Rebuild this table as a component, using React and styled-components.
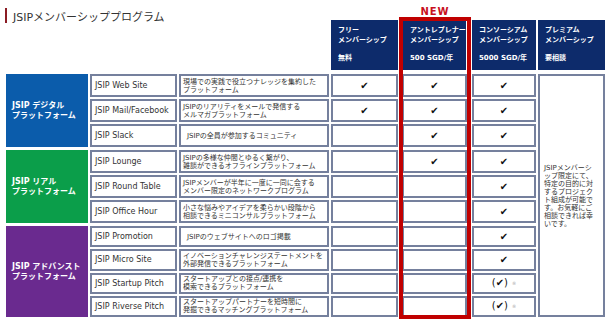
import React from "react";
import styled, { createGlobalStyle } from "styled-components";

const GlobalStyle = createGlobalStyle`
  html, body {
    margin: 0;
    padding: 0;
    background: #fff;
  }
  body {
    font-family: "DejaVu Sans", "Noto Sans CJK JP", sans-serif;
    color: #333;
  }
`;

const COLS = "82px 87px 150px 67px 70px 64px";

const Page = styled.div`
  position: relative;
  width: 610px;
  height: 324px;
  padding-left: 6px;
  box-sizing: border-box;
  overflow: hidden;
`;

const TopGrid = styled.div`
  display: grid;
  grid-template-columns: ${COLS} 67px;
  grid-template-rows: 16px 50px;
  column-gap: 2px;
  row-gap: 4px;
`;

const Title = styled.h1`
  grid-column: 1 / 4;
  grid-row: 1 / 3;
  align-self: start;
  display: flex;
  align-items: center;
  gap: 6px;
  height: 15px;
  margin: 8px 0 0 -1px;
  font-size: 11px;
  font-weight: normal;
  color: #333;

  &::before {
    content: "";
    width: 2px;
    height: 15px;
    background: #8b1c24;
  }
`;

const NewLabel = styled.div`
  grid-column: 5;
  grid-row: 1;
  align-self: end;
  text-align: center;
  font-size: 10px;
  line-height: 10px;
  font-weight: bold;
  letter-spacing: 1px;
  color: #c8101e;
  margin-bottom: -1px;
`;

const HeadCell = styled.div`
  grid-row: 2;
  grid-column: ${(p) => p.col};
  margin: ${(p) => (p.inset ? "0 4px 0 3px" : "0")};
  padding: 5px 4px 0 7px;
  background: #0d2b6b;
  color: #fff;
  font-size: 7px;
  line-height: 10px;
  font-weight: bold;
  white-space: nowrap;
`;

const Price = styled.div`
  margin-top: 8px;
`;

const Body = styled.div`
  display: flex;
  gap: 2px;
  margin-top: 4px;
`;

const Groups = styled.div`
  display: flex;
  flex-direction: column;
  gap: 3px;
`;

const Group = styled.div`
  display: grid;
  grid-template-columns: ${COLS};
  grid-template-rows: repeat(${(p) => p.rows}, 1fr);
  column-gap: 2px;
  row-gap: 2px;
  height: ${(p) => p.h}px;
`;

const Category = styled.div`
  grid-column: 1;
  grid-row: 1 / -1;
  display: flex;
  align-items: center;
  padding-left: 6px;
  background: ${(p) => p.color};
  color: #fff;
  font-size: 8px;
  line-height: 10px;
  font-weight: bold;
`;

const Cell = styled.div`
  display: flex;
  align-items: center;
  min-width: 0;
  border: 2px solid #75809d;
  background: #fff;
  box-sizing: border-box;
`;

const NameCell = styled(Cell)`
  padding-left: 3px;
  font-size: 8px;
  color: #333;
  white-space: nowrap;
`;

const DescCell = styled(Cell)`
  padding-left: ${(p) => p.indent}px;
  font-size: 7px;
  line-height: 8px;
  color: #333;
  white-space: nowrap;
`;

const MarkCell = styled(Cell)`
  justify-content: center;
  margin: ${(p) => (p.inset ? "0 3px 0 2px" : "0")};
  font-size: 10px;
  line-height: 10px;
  color: #111;
`;

const Note = styled.span`
  margin-left: 4px;
  font-size: 5px;
  color: #b0b0b0;
`;

const Premium = styled(Cell)`
  width: 67px;
  padding-left: 4px;
  font-size: 7px;
  line-height: 8px;
  color: #333;
`;

const RedFrame = styled.div`
  position: absolute;
  left: 399px;
  top: 17px;
  width: 72px;
  height: 302px;
  border: 4px solid #c00000;
  box-sizing: border-box;
  pointer-events: none;
`;

const groups = [
  {
    label: ["JSIP デジタル", "プラットフォーム"],
    color: "#0b5cab",
    h: 73,
    rows: [
      { name: "JSIP Web Site", desc: ["現場での実践で役立つナレッジを集約した", "プラットフォーム"], marks: ["✔", "✔", "✔"] },
      { name: "JSIP Mail/Facebook", desc: ["JSIPのリアリティをメールで発信する", "メルマガプラットフォーム"], marks: ["✔", "✔", "✔"] },
      { name: "JSIP Slack", desc: ["JSIPの全員が参加するコミュニティ"], indent: 6, marks: ["", "✔", "✔"] },
    ],
  },
  {
    label: ["JSIP リアル", "プラットフォーム"],
    color: "#0b9e4a",
    h: 73,
    rows: [
      { name: "JSIP Lounge", desc: ["JSIPの多様な仲間とゆるく繋がり、", "雑談ができるオフラインプラットフォーム"], marks: ["", "✔", "✔"] },
      { name: "JSIP Round Table", desc: ["JSIPメンバーが半年に一度に一同に会する", "メンバー限定のネットワークプログラム"], marks: ["", "", "✔"] },
      { name: "JSIP Office Hour", desc: ["小さな悩みやアイデアを柔らかい段階から", "相談できるミニコンサルプラットフォーム"], marks: ["", "", "✔"] },
    ],
  },
  {
    label: ["JSIP アドバンスト", "プラットフォーム"],
    color: "#6a2a8f",
    h: 91,
    rows: [
      { name: "JSIP Promotion", desc: ["JSIPのウェブサイトへのロゴ掲載"], indent: 6, marks: ["", "", "✔"] },
      { name: "JSIP Micro Site", desc: ["イノベーションチャレンジステートメントを", "外部発信できるプラットフォーム"], marks: ["", "", "✔"] },
      { name: "JSIP Startup Pitch", desc: ["スタートアップとの接点/連携を", "模索できるプラットフォーム"], marks: ["", "", "note"] },
      { name: "JSIP Riverse Pitch", desc: ["スタートアップパートナーを短時間に", "発掘できるマッチングプラットフォーム"], marks: ["", "", "note"] },
    ],
  },
];

const headers = [
  { lines: ["フリー", "メンバーシップ"], price: "無料" },
  { lines: ["アントレプレナー", "メンバーシップ"], price: "500 SGD/年", inset: true },
  { lines: ["コンソーシアム", "メンバーシップ"], price: "5000 SGD/年" },
  { lines: ["プレミアム", "メンバーシップ"], price: "要相談" },
];

const Lines = ({ lines }) =>
  lines.map((l, i) => (
    <React.Fragment key={i}>
      {i > 0 && <br />}
      {l}
    </React.Fragment>
  ));

const Mark = ({ value }) => {
  if (value === "note") {
    return (
      <>
        (✔)<Note>※</Note>
      </>
    );
  }
  return value;
};

export default function App() {
  return (
    <Page>
      <GlobalStyle />
      <TopGrid>
        <Title>JSIPメンバーシッププログラム</Title>
        <NewLabel>NEW</NewLabel>
        {headers.map((h, i) => (
          <HeadCell key={i} col={i + 4} inset={h.inset}>
            <Lines lines={h.lines} />
            <Price>{h.price}</Price>
          </HeadCell>
        ))}
      </TopGrid>
      <Body>
        <Groups>
          {groups.map((g) => (
            <Group key={g.label[0]} rows={g.rows.length} h={g.h}>
              <Category color={g.color}>
                <div>
                  <Lines lines={g.label} />
                </div>
              </Category>
              {g.rows.map((r) => (
                <React.Fragment key={r.name}>
                  <NameCell>{r.name}</NameCell>
                  <DescCell indent={r.indent || 2}>
                    <div>
                      <Lines lines={r.desc} />
                    </div>
                  </DescCell>
                  {r.marks.map((m, i) => (
                    <MarkCell key={i} inset={i === 1}>
                      <Mark value={m} />
                    </MarkCell>
                  ))}
                </React.Fragment>
              ))}
            </Group>
          ))}
        </Groups>
        <Premium>
          <div>
            <Lines
              lines={[
                "JSIPメンバーシ",
                "ップ限定にて、",
                "特定の目的に対",
                "するプロジェク",
                "ト組成が可能で",
                "す。お気軽にご",
                "相談できれば幸",
                "いです。",
              ]}
            />
          </div>
        </Premium>
      </Body>
      <RedFrame />
    </Page>
  );
}
